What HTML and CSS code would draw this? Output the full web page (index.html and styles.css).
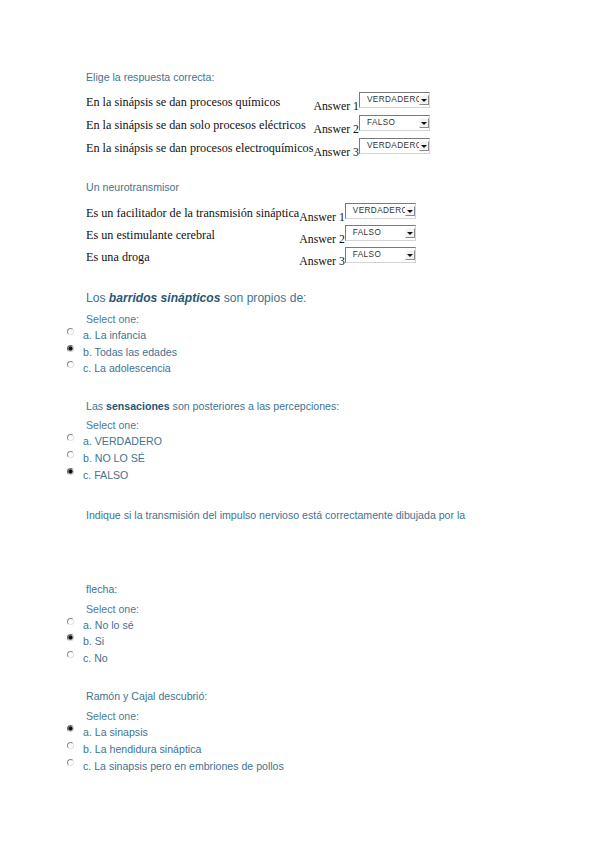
FILE: index.html
```html
<!DOCTYPE html>
<html lang="es">
<head>
<meta charset="utf-8">
<link rel="stylesheet" href="styles.css">
</head>
<body>
<div class="page">
  <div class="qtext first">Elige la respuesta correcta:</div>
  <div class="match m1">
    <div class="mq">En la sinápsis se dan procesos químicos</div>
    <div class="ml">Answer 1</div>
    <div class="sel"><span class="sv">VERDADERO</span><span class="sb"></span></div>
    <div class="mq">En la sinápsis se dan solo procesos eléctricos</div>
    <div class="ml">Answer 2</div>
    <div class="sel"><span class="sv">FALSO</span><span class="sb"></span></div>
    <div class="mq">En la sinápsis se dan procesos electroquímicos</div>
    <div class="ml">Answer 3</div>
    <div class="sel"><span class="sv">VERDADERO</span><span class="sb"></span></div>
  </div>

  <div class="qtext q2">Un neurotransmisor</div>
  <div class="match m2">
    <div class="mq">Es un facilitador de la transmisión sináptica</div>
    <div class="ml">Answer 1</div>
    <div class="sel"><span class="sv">VERDADERO</span><span class="sb"></span></div>
    <div class="mq">Es un estimulante cerebral</div>
    <div class="ml">Answer 2</div>
    <div class="sel"><span class="sv">FALSO</span><span class="sb"></span></div>
    <div class="mq">Es una droga</div>
    <div class="ml">Answer 3</div>
    <div class="sel"><span class="sv">FALSO</span><span class="sb"></span></div>
  </div>

  <div class="qtext big">Los <b><i>barridos sinápticos</i></b> son propios de:</div>
  <div class="prompt">Select one:</div>
  <ul class="opts">
    <li><span class="radio"></span>a. La infancia</li>
    <li><span class="radio on"></span>b. Todas las edades</li>
    <li><span class="radio"></span>c. La adolescencia</li>
  </ul>

  <div class="qtext q4">Las <b>sensaciones</b> son posteriores a las percepciones:</div>
  <div class="prompt p4">Select one:</div>
  <ul class="opts o4">
    <li><span class="radio"></span>a. VERDADERO</li>
    <li><span class="radio"></span>b. NO LO SÉ</li>
    <li><span class="radio on"></span>c. FALSO</li>
  </ul>

  <div class="qtext q5">Indique si la transmisión del impulso nervioso está correctamente dibujada por la</div>
  <div class="qtext flecha">flecha:</div>
  <div class="prompt">Select one:</div>
  <ul class="opts">
    <li><span class="radio"></span>a. No lo sé</li>
    <li><span class="radio on"></span>b. Si</li>
    <li><span class="radio"></span>c. No</li>
  </ul>

  <div class="qtext q6">Ramón y Cajal descubrió:</div>
  <div class="prompt">Select one:</div>
  <ul class="opts o4">
    <li><span class="radio on"></span>a. La sinapsis</li>
    <li><span class="radio"></span>b. La hendidura sináptica</li>
    <li><span class="radio"></span>c. La sinapsis pero en embriones de pollos</li>
  </ul>
</div>
</body>
</html>
```

FILE: styles.css
```css
html, body {
  margin: 0;
  padding: 0;
  background: #ffffff;
}
.page {
  width: 599px;
  height: 848px;
  padding-left: 86px;
  box-sizing: border-box;
  padding-top: 69px;
  font-family: "Liberation Sans", Arial, sans-serif;
  color: #3f7391;
  overflow: hidden;
}
.qtext {
  font-size: 10.6px;
  line-height: 16px;
  height: 16px;
  white-space: nowrap;
}
.qtext b {
  color: #285775;
}
.q2 { margin-top: 19px; }
.big {
  font-size: 12.1px;
  line-height: 18px;
  height: 18px;
  margin-top: 21px;
}
.q4 { margin-top: 21.5px; }
.q5 { margin-top: 22.5px; }
.flecha { margin-top: 58px; }
.q6 { margin-top: 21.5px; }

.match {
  display: grid;
  grid-template-columns: max-content max-content max-content;
  grid-auto-rows: 23px;
  font-family: "Liberation Serif", "Times New Roman", serif;
  color: #111111;
  margin-top: 6px;
}
.m2 {
  grid-auto-rows: 22px;
  margin-top: 7px;
}
.mq {
  font-size: 12.2px;
  line-height: 22px;
  white-space: nowrap;
}
.ml {
  font-size: 11.8px;
  line-height: 15px;
  padding-top: 8px;
  white-space: nowrap;
}
.sel {
  width: 71px;
  height: 16px;
  box-sizing: border-box;
  margin-top: 1px;
  border-left: 1px solid #7a7a7a;
  border-top: 1px solid #7a7a7a;
  border-right: 1px solid #d4d4d4;
  border-bottom: 1px solid #d4d4d4;
  display: flex;
  align-items: flex-start;
  background: #fff;
}
.sv {
  flex: 1;
  overflow: hidden;
  white-space: nowrap;
  font-family: "Liberation Sans", Arial, sans-serif;
  font-size: 8.2px;
  letter-spacing: 0.4px;
  line-height: 9px;
  color: #333;
  padding-left: 7px;
  padding-top: 2px;
}
.sb {
  width: 10px;
  height: 10px;
  box-sizing: border-box;
  margin-top: 2px;
  background: #f2f2f2;
  border-right: 1px solid #8a8a8a;
  border-bottom: 1px solid #8a8a8a;
  border-top: 1px solid #fafafa;
  border-left: 1px solid #fafafa;
  display: flex;
  align-items: center;
  justify-content: center;
  flex: none;
}
.sb::after {
  content: "";
  width: 0;
  height: 0;
  border-left: 3px solid transparent;
  border-right: 3px solid transparent;
  border-top: 3px solid #111;
}

.prompt {
  font-size: 10.6px;
  line-height: 16px;
  height: 16px;
  margin-top: 4px;
  color: #4a7c98;
}
.p4 { margin-top: 3px; }
.opts {
  list-style: none;
  margin: 0 0 0 -19px;
  padding: 0;
}
.opts li {
  display: flex;
  align-items: flex-start;
  gap: 9px;
  font-size: 10.6px;
  line-height: 16.6px;
  height: 16.6px;
  white-space: nowrap;
}
.o4 li {
  line-height: 17px;
  height: 17px;
}
.radio {
  width: 7px;
  height: 7px;
  margin-top: 1px;
  box-sizing: border-box;
  border-radius: 50%;
  border: 1px solid;
  border-color: #8a8a8a #e2e2e2 #e2e2e2 #8a8a8a;
  background: #fff;
  flex: none;
}
.radio.on {
  background: radial-gradient(circle, #111 0 1.6px, #777 2.2px, #fff 2.6px);
  border-color: #6a6a6a #d0d0d0 #d0d0d0 #6a6a6a;
}
```
